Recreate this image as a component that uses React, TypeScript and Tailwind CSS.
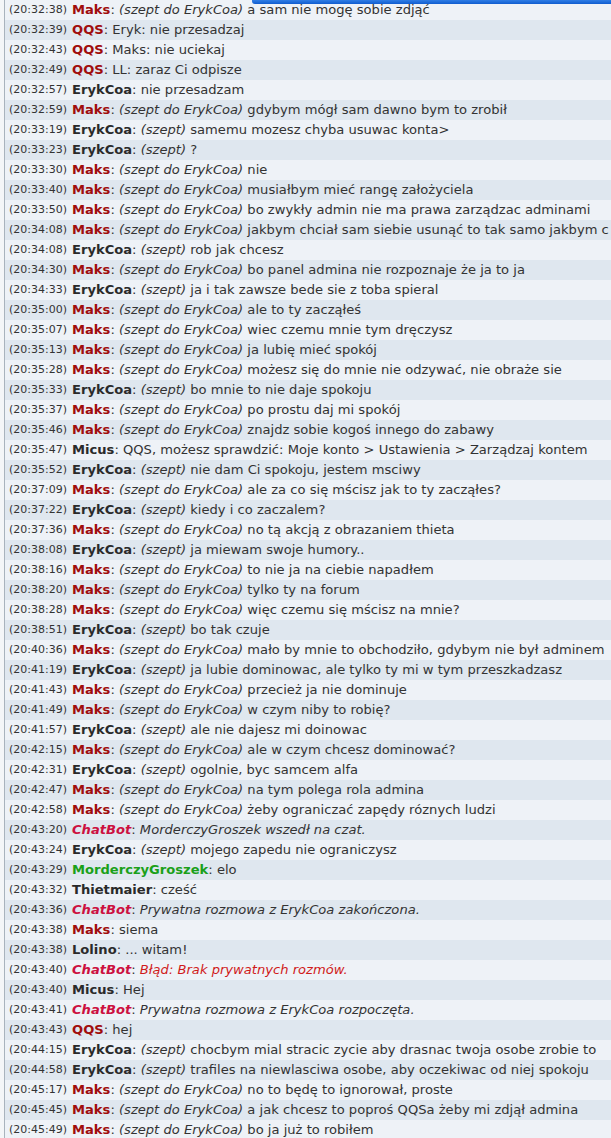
type Kind = 'mod' | 'user' | 'bot' | 'green';

interface Line {
  time: string;
  nick: string;
  kind: Kind;
  whisper?: string;
  text: string;
  tone?: 'plain' | 'bot' | 'error';
}

const M = (time: string, text: string): Line => ({ time, nick: 'Maks', kind: 'mod', whisper: '(szept do ErykCoa)', text });
const E = (time: string, text: string): Line => ({ time, nick: 'ErykCoa', kind: 'user', whisper: '(szept)', text });

const lines: Line[] = [
  M('20:32:38', 'a sam nie mogę sobie zdjąć'),
  { time: '20:32:39', nick: 'QQS', kind: 'mod', text: 'Eryk: nie przesadzaj' },
  { time: '20:32:43', nick: 'QQS', kind: 'mod', text: 'Maks: nie uciekaj' },
  { time: '20:32:49', nick: 'QQS', kind: 'mod', text: 'LL: zaraz Ci odpisze' },
  { time: '20:32:57', nick: 'ErykCoa', kind: 'user', text: 'nie przesadzam' },
  M('20:32:59', 'gdybym mógł sam dawno bym to zrobił'),
  E('20:33:19', 'samemu mozesz chyba usuwac konta>'),
  E('20:33:23', '?'),
  M('20:33:30', 'nie'),
  M('20:33:40', 'musiałbym mieć rangę założyciela'),
  M('20:33:50', 'bo zwykły admin nie ma prawa zarządzac adminami'),
  M('20:34:08', 'jakbym chciał sam siebie usunąć to tak samo jakbym c'),
  E('20:34:08', 'rob jak chcesz'),
  M('20:34:30', 'bo panel admina nie rozpoznaje że ja to ja'),
  E('20:34:33', 'ja i tak zawsze bede sie z toba spieral'),
  M('20:35:00', 'ale to ty zacząłeś'),
  M('20:35:07', 'wiec czemu mnie tym dręczysz'),
  M('20:35:13', 'ja lubię mieć spokój'),
  M('20:35:28', 'możesz się do mnie nie odzywać, nie obraże sie'),
  E('20:35:33', 'bo mnie to nie daje spokoju'),
  M('20:35:37', 'po prostu daj mi spokój'),
  M('20:35:46', 'znajdz sobie kogoś innego do zabawy'),
  { time: '20:35:47', nick: 'Micus', kind: 'user', text: 'QQS, możesz sprawdzić: Moje konto > Ustawienia > Zarządzaj kontem' },
  E('20:35:52', 'nie dam Ci spokoju, jestem msciwy'),
  M('20:37:09', 'ale za co się mścisz jak to ty zacząłes?'),
  E('20:37:22', 'kiedy i co zaczalem?'),
  M('20:37:36', 'no tą akcją z obrazaniem thieta'),
  E('20:38:08', 'ja miewam swoje humory..'),
  M('20:38:16', 'to nie ja na ciebie napadłem'),
  M('20:38:20', 'tylko ty na forum'),
  M('20:38:28', 'więc czemu się mścisz na mnie?'),
  E('20:38:51', 'bo tak czuje'),
  M('20:40:36', 'mało by mnie to obchodziło, gdybym nie był adminem'),
  E('20:41:19', 'ja lubie dominowac, ale tylko ty mi w tym przeszkadzasz'),
  M('20:41:43', 'przecież ja nie dominuje'),
  M('20:41:49', 'w czym niby to robię?'),
  E('20:41:57', 'ale nie dajesz mi doinowac'),
  M('20:42:15', 'ale w czym chcesz dominować?'),
  E('20:42:31', 'ogolnie, byc samcem alfa'),
  M('20:42:47', 'na tym polega rola admina'),
  M('20:42:58', 'żeby ograniczać zapędy róznych ludzi'),
  { time: '20:43:20', nick: 'ChatBot', kind: 'bot', text: 'MorderczyGroszek wszedł na czat.', tone: 'bot' },
  E('20:43:24', 'mojego zapedu nie ograniczysz'),
  { time: '20:43:29', nick: 'MorderczyGroszek', kind: 'green', text: 'elo' },
  { time: '20:43:32', nick: 'Thietmaier', kind: 'user', text: 'cześć' },
  { time: '20:43:36', nick: 'ChatBot', kind: 'bot', text: 'Prywatna rozmowa z ErykCoa zakończona.', tone: 'bot' },
  { time: '20:43:38', nick: 'Maks', kind: 'mod', text: 'siema' },
  { time: '20:43:38', nick: 'Lolino', kind: 'user', text: '... witam!' },
  { time: '20:43:40', nick: 'ChatBot', kind: 'bot', text: 'Błąd: Brak prywatnych rozmów.', tone: 'error' },
  { time: '20:43:40', nick: 'Micus', kind: 'user', text: 'Hej' },
  { time: '20:43:41', nick: 'ChatBot', kind: 'bot', text: 'Prywatna rozmowa z ErykCoa rozpoczęta.', tone: 'bot' },
  { time: '20:43:43', nick: 'QQS', kind: 'mod', text: 'hej' },
  E('20:44:15', 'chocbym mial stracic zycie aby drasnac twoja osobe zrobie to'),
  E('20:44:58', 'trafiles na niewlasciwa osobe, aby oczekiwac od niej spokoju'),
  M('20:45:17', 'no to będę to ignorował, proste'),
  M('20:45:45', 'a jak chcesz to poproś QQSa żeby mi zdjął admina'),
  M('20:45:49', 'bo ja już to robiłem'),
];

const nickClass: Record<Kind, string> = {
  mod: 'font-bold text-[#a00d0d]',
  user: 'font-bold text-[#2a2a2a]',
  bot: 'font-bold italic text-[#cc1040]',
  green: 'font-bold text-[#1aa01a]',
};

function Row({ line, odd }: { line: Line; odd: boolean }) {
  const textClass =
    line.tone === 'error'
      ? 'italic text-[#d01a1a]'
      : line.tone === 'bot'
        ? 'italic text-[#333]'
        : 'text-[#333]';

  return (
    <div
      className={`flex h-5 shrink-0 items-center overflow-hidden whitespace-nowrap pl-[4px] ${
        odd ? 'bg-[#eef2f7]' : 'bg-[#dfe7ef]'
      }`}
    >
      <span className="text-[11px] text-[#333]">({line.time})</span>
      <span className="ml-[5px] text-[13.1px]">
        <span className={nickClass[line.kind]}>{line.nick}</span>
        <span className="text-[#333]">: </span>
        {line.whisper && <span className="italic text-[#333]">{line.whisper} </span>}
        <span className={textClass}>{line.text}</span>
      </span>
    </div>
  );
}

export default function App() {
  return (
    <div className="relative flex h-[1138px] w-[611px] overflow-hidden bg-[#eef2f7] font-['DejaVu_Sans',Verdana,sans-serif]">
      {/* window frame on the left */}
      <div className="w-[5px] shrink-0 border-r border-[#a9b3bd] bg-[#f4f6f8]" />
      <div className="flex min-w-0 flex-1 flex-col">
        {lines.map((line, i) => (
          <Row key={i} line={line} odd={i % 2 === 0} />
        ))}
      </div>
      {/* edge of the blue title bar above */}
      <div className="absolute left-[252px] right-0 top-0 h-[4px] rounded-bl-[3px] bg-gradient-to-b from-[#2f7ee6] to-[#0f5ccf]" />
    </div>
  );
}
